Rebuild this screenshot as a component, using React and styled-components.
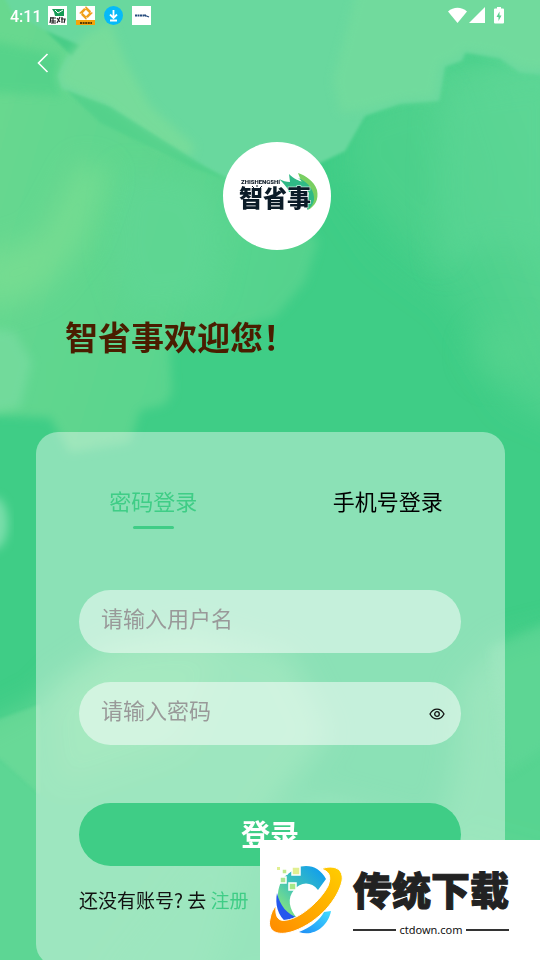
import { useState } from 'react';
import styled, { createGlobalStyle } from 'styled-components';

const GlobalStyle = createGlobalStyle`
    * {
        box-sizing: border-box;
    }
    html {
        scrollbar-width: none;
    }
    body {
        margin: 0;
        font-family: Roboto, "Noto Sans CJK SC", sans-serif;
        background-color: #3fcd86;
    }
    button, input {
        font-family: inherit;
        border: none;
        background: none;
        padding: 0;
    }
`;
const Screen = styled.div`
    position: relative;
    min-height: 100vh;
    overflow: hidden;
    background-color: #3fcd86;
`;
const Backdrop = styled.svg`
    position: absolute;
    inset: 0;
    width: 100%;
    height: 100%;
`;
const Content = styled.div`
    position: relative;
    display: flex;
    flex-direction: column;
`;
const StatusBar = styled.div`
    display: flex;
    align-items: center;
    justify-content: space-between;
    height: 32px;
    padding: 0 35px 0 10px;
    color: white;
`;
const StatusGroup = styled.div`
    display: flex;
    align-items: center;
    gap: ${(props) => props.$gap}px;
`;
const Clock = styled.span`
    font-size: 16px;
    font-weight: 500;
`;
const NavBar = styled.header`
    display: flex;
    align-items: center;
    height: 62px;
    padding-left: 30px;
`;
const BackButton = styled.button`
    display: flex;
    padding: 3px;
    cursor: pointer;
`;
const Avatar = styled.div`
    align-self: center;
    width: 108px;
    height: 108px;
    margin: 48px 0 0 14px;
    border-radius: 50%;
    overflow: hidden;
    background-color: white;
`;
const Title = styled.h1`
    margin: 62px 0 72px 65px;
    font-size: 33px;
    line-height: 48px;
    font-weight: 700;
    font-family: "Noto Sans CJK SC", sans-serif;
    color: #4a1d00;
`;
const Card = styled.main`
    margin: 0 35px 0 36px;
    padding: 48px 0 52px;
    border-radius: 22px;
    background-color: rgba(255, 255, 255, 0.4);
`;
const Tabs = styled.div`
    display: grid;
    grid-template-columns: 1fr 1fr;
`;
const Tab = styled.button`
    display: flex;
    flex-direction: column;
    align-items: center;
    font-size: 22px;
    line-height: 46px;
    color: ${(props) => (props.$active ? '#3fcd86' : 'black')};
    cursor: pointer;
    &::after {
        content: '';
        width: 41px;
        height: 3px;
        border-radius: 2px;
        background-color: ${(props) => (props.$active ? '#3fcd86' : 'transparent')};
    }
`;
const Form = styled.form`
    display: flex;
    flex-direction: column;
    gap: 29px;
    padding: 61px 44px 0 43px;
`;
const Field = styled.div`
    display: flex;
    align-items: center;
    height: 63px;
    padding: 0 16px 0 22px;
    border-radius: 32px;
    background-color: rgba(255, 255, 255, 0.5);
`;
const Input = styled.input`
    flex: 1;
    min-width: 0;
    height: 100%;
    padding-bottom: 4px;
    font-size: 22px;
    outline: none;
    &::placeholder {
        color: #999;
        opacity: 1;
    }
`;
const EyeButton = styled.button`
    display: flex;
    cursor: pointer;
`;
const SubmitButton = styled.button`
    height: 63px;
    margin-top: 29px;
    padding-bottom: 4px;
    border-radius: 32px;
    font-size: 29px;
    font-weight: 700;
    color: white;
    background-color: #3fcd86;
    cursor: pointer;
`;
const RegisterRow = styled.p`
    margin: 20px 43px 0;
    font-family: "Noto Sans CJK SC", sans-serif;
    font-size: 19px;
    line-height: 28px;
    color: #111;
`;
const RegisterLink = styled.a`
    color: #3fcd86;
    text-decoration: none;
`;
const Banner = styled.aside`
    position: fixed;
    right: 0;
    bottom: 0;
    display: flex;
    align-items: center;
    gap: 9px;
    height: 120px;
    padding: 0 31px 0 8px;
    background-color: white;
`;
const BannerText = styled.div`
    display: flex;
    flex-direction: column;
    color: #222;
    font-family: "Noto Sans CJK SC", sans-serif;
`;
const BannerName = styled.strong`
    font-size: 39px;
    line-height: 60px;
    font-weight: 900;
    -webkit-text-stroke: 1px #222;
`;
const BannerSite = styled.span`
    display: flex;
    align-items: center;
    gap: 3px;
    font-family: "Noto Sans", sans-serif;
    font-size: 11px;
    line-height: 24px;
    color: #111;
    &::before, &::after {
        content: '';
        flex: 1;
        height: 2px;
        background-color: #333;
    }
`;

function Background(){
    return(
        <Backdrop viewBox="0 0 540 960" preserveAspectRatio="none" aria-hidden="true">
            <defs>
                <filter id="crisp" x="-20%" y="-20%" width="140%" height="140%">
                    <feGaussianBlur stdDeviation="1.5" />
                </filter>
                <filter id="soft" x="-20%" y="-20%" width="140%" height="140%">
                    <feGaussianBlur stdDeviation="5" />
                </filter>
                <filter id="softer" x="-40%" y="-40%" width="180%" height="180%">
                    <feGaussianBlur stdDeviation="14" />
                </filter>
                <linearGradient id="leftWash" x1="0" y1="0.3" x2="1" y2="0.7">
                    <stop offset="0" stopColor="#68d88f" />
                    <stop offset="1" stopColor="#52d28d" />
                </linearGradient>
                <linearGradient id="rightWash" x1="0.2" y1="0.6" x2="0.8" y2="0.2">
                    <stop offset="0" stopColor="#3fcd86" />
                    <stop offset="0.6" stopColor="#52d28e" />
                    <stop offset="1" stopColor="#5cd694" />
                </linearGradient>
            </defs>

            {/* right side */}
            <path d="M340 120L430 60L580 50V430L510 400L450 300L380 250L340 190Z" fill="url(#rightWash)" filter="url(#softer)" />
            <path d="M350 115L440 85L470 180L440 260L390 220L345 170Z" fill="#50d18c" opacity="0.6" filter="url(#softer)" />
            <path d="M440 90L560 70V260L500 240L440 270L435 180Z" fill="#5cd695" opacity="0.6" filter="url(#softer)" />
            <ellipse cx="505" cy="350" rx="35" ry="30" fill="#58d48e" opacity="0.5" filter="url(#softer)" />

            {/* left side */}
            <path d="M-20 -10H60L240 165L318 240L305 280L275 315L240 325L170 345L172 390L165 402L140 408L130 440L70 450L50 415L-20 412Z" fill="url(#leftWash)" filter="url(#soft)" />
            <path d="M120 170L200 180L225 230L210 300L130 310L110 250Z" fill="#60d795" opacity="0.7" filter="url(#softer)" />
            <path d="M80 160L110 170L85 240L45 290L-20 310V255L40 235Z" fill="#7fdf93" opacity="0.65" filter="url(#softer)" />
            <path d="M-20 325L15 330L32 360L20 405L-20 412Z" fill="#7ddda4" opacity="0.6" filter="url(#soft)" />
            <path d="M-10 40L60 55L60 95L-10 92Z" fill="#50d188" opacity="0.7" filter="url(#soft)" />
            <ellipse cx="-6" cy="520" rx="14" ry="26" fill="#79deaa" filter="url(#soft)" />

            {/* top band */}
            <g filter="url(#crisp)">
                <path d="M0 -10H550V75L520 72L500 58L465 52L462 60L445 66L439 100L400 103L365 115L345 150L320 162L270 182L226 176L195 162L150 135L105 104L62 88L58 75L66 58L80 46L45 30L12 12Z" fill="#69d89e" />
                <path d="M45 30L80 45L72 56Z" fill="#41cb86" opacity="0.8" />
            </g>
            <path d="M60 85L58 75L66 58L85 35L110 22L125 60L150 105L195 145L190 157L160 148L105 104Z" fill="#7cdd9a" opacity="0.75" filter="url(#soft)" />
            <path d="M357 -10H550V70L520 68L500 56L465 50L459 58L441 64L435 98L400 100L365 109L340 112L333 80Z" fill="#73db9d" opacity="0.8" filter="url(#soft)" />
            <path d="M66 90L110 106L225 178L195 168L100 122Z" fill="#50d08a" opacity="0.7" filter="url(#crisp)" />

            {/* bottom */}
            <g filter="url(#softer)">
                <path d="M-40 735L40 695L120 640L190 622L290 650L330 730L250 830L200 1000H-40Z" fill="#66d897" opacity="0.8" />
                <path d="M50 680L110 640L220 650L180 740L60 780Z" fill="#77dd9b" opacity="0.45" />
                <path d="M580 620L500 640L460 680L455 760L430 860L580 900Z" fill="#5fd694" opacity="0.8" />
                <path d="M100 980L200 850L320 790L580 860V980Z" fill="#5dd594" opacity="0.7" />
            </g>
            <path d="M-10 718L40 700V790L-10 745Z" fill="#70da9a" opacity="0.6" filter="url(#crisp)" />
            <path d="M490 645L550 618V740L505 770Z" fill="#62d797" opacity="0.6" filter="url(#soft)" />
        </Backdrop>
    );
}

function NotificationIcons(){
    return(
        <svg width="103" height="20" viewBox="0 0 103 20" aria-hidden="true">
            <rect width="19" height="19" fill="white" />
            <path d="M4 3H16V10H7L6 6Z" fill="#159a54" />
            <path d="M7 4L10 7L15 4" fill="none" stroke="white" strokeWidth="1" />
            <path d="M2 12H8M2 15H8M3 17H8M5 11V17M9 12L12 16M12 11L9 17M14 11V17M13 13H17L16 17M3 11L2 17" stroke="#222" strokeWidth="1.2" fill="none" />
            <rect x="28" width="19" height="19" fill="white" />
            <rect x="28" y="14" width="19" height="5" fill="#f5a30a" />
            <path d="M38 2L43 7L38 12L33 7Z" fill="none" stroke="#f0a01e" strokeWidth="2.5" strokeDasharray="6 1" />
            <path d="M32 17H44" stroke="#5a3b00" strokeWidth="2" strokeDasharray="2 0.6" />
            <circle cx="65.5" cy="9.5" r="9.5" fill="#06baf8" />
            <path d="M65.5 4V11M62 8.5L65.5 12L69 8.5M62 14.5H69" fill="none" stroke="white" strokeWidth="1.8" />
            <rect x="84" width="19" height="19" fill="white" />
            <path d="M87 9.5H98" stroke="#244a7c" strokeWidth="2" strokeDasharray="2 0.5" />
            <path d="M96 9L101 11" stroke="#244a7c" strokeWidth="1.2" />
        </svg>
    );
}

function SystemIcons(){
    return(
        <svg width="57" height="18" viewBox="0 0 57 18" aria-hidden="true" fill="white">
            <path d="M0 4.5C5.5 -0.5 13.5 -0.5 19 4.5L9.5 16Z" />
            <path d="M37 0V16H21Z" />
            <path d="M49 0H53V1.5H55Q56 1.5 56 2.5V15.5Q56 16.5 55 16.5H47Q46 16.5 46 15.5V2.5Q46 1.5 47 1.5H49Z" />
            <path d="M51.5 4.5L48.5 10H50.5V14L53.5 8.5H51.5Z" fill="#59cf8d" />
        </svg>
    );
}

function BrandLogo(){
    return(
        <svg width="108" height="108" viewBox="0 0 108 108" role="img" aria-label="智省事">
            <path d="M75 31C82 33 91 39 94 48C96 58 92 64 85 68C89 60 88 49 80 44Z" fill="#79cf62" />
            <path d="M56 37C60 39 63 40 67 40L66 32C71 37 76 39 80 40L75 36C86 40 92 50 91 58C90 63 87 66 84 68L86 50H66C65 46 61 42 56 37Z" fill="#2fb986" />
            <text x="18" y="42" fontFamily="Roboto, sans-serif" fontSize="6" fontWeight="900" fill="#101c28">ZHISHENGSHI</text>
            <text x="16" y="65" fontFamily="Liberation Sans, Noto Sans CJK SC, sans-serif" fontSize="24" fontWeight="900" fill="#0c1c28" stroke="white" strokeWidth="1" paintOrder="stroke">智省事</text>
            <path d="M29 44L31 46M34 43V45M39 44L37 46" stroke="#0c1c28" strokeWidth="1" />
        </svg>
    );
}

function BannerLogo(){
    return(
        <svg width="76" height="74" viewBox="0 0 76 74" aria-hidden="true">
            <defs>
                <linearGradient id="arc" x1="0.2" y1="1" x2="1" y2="0.1">
                    <stop offset="0" stopColor="#8ce87c" />
                    <stop offset="0.45" stopColor="#40c3b6" />
                    <stop offset="1" stopColor="#0d9bf2" />
                </linearGradient>
                <linearGradient id="ring" x1="0" y1="1" x2="1" y2="0">
                    <stop offset="0" stopColor="#ff8a00" />
                    <stop offset="1" stopColor="#ffce00" />
                </linearGradient>
                <linearGradient id="tail" x1="0" y1="1" x2="1" y2="0">
                    <stop offset="0" stopColor="#1e8df5" />
                    <stop offset="1" stopColor="#40dcff" />
                </linearGradient>
            </defs>
            <path d="M28 5C40 0 52 4 58 16L50 27C43 18 32 19 26 27C19 35 21 46 29 55L18 58C8 46 7 26 16 14Z" fill="url(#arc)" />
            <path d="M9 30C12 43 19 51 30 55L20 61C9 52 7 41 9 30Z" fill="#2458ed" />
            <path d="M31 69C42 65 52 57 56 49L63 48C60 64 45 74 31 69Z" fill="url(#tail)" />
            <path d="M53 6C66 1 76 6 74 18C70 36 51 59 26 68C9 74 -1 68 2 56C3 50 5 46 8 43C7 54 10 59 19 57C33 55 53 37 60 23C64 13 61 8 53 6Z" fill="url(#ring)" stroke="white" strokeWidth="1" />
            <g stroke="white" strokeWidth="1.5">
                <rect x="24" y="4" width="8" height="8" fill="#e1ef91" />
                <rect x="14" y="6" width="5" height="5" fill="#c0e98b" />
                <rect x="12" y="14" width="6" height="6" fill="#a9e593" />
                <rect x="21" y="20" width="7" height="7" fill="#a6e889" />
            </g>
            <rect x="9" y="4" width="3" height="3" fill="#e1ef91" />
        </svg>
    );
}

function LoginPage(){
    const [tab, setTab] = useState('password');
    const [showPassword, setShowPassword] = useState(false);

    return(
        <Screen>
            <GlobalStyle />
            <Background />
            <Content>
                <StatusBar>
                    <StatusGroup $gap={6}>
                        <Clock>4:11</Clock>
                        <NotificationIcons />
                    </StatusGroup>
                    <SystemIcons />
                </StatusBar>
                <NavBar>
                    <BackButton type="button" aria-label="返回">
                        <svg width="20" height="20" viewBox="0 0 20 20" fill="none" stroke="white" strokeWidth="1.6">
                            <path d="M14.5 1L5.5 10L14.5 19" />
                        </svg>
                    </BackButton>
                </NavBar>
                <Avatar><BrandLogo /></Avatar>
                <Title>智省事欢迎您！</Title>
                <Card>
                    <Tabs>
                        <Tab type="button" $active={tab === 'password'} onClick={() => setTab('password')}>密码登录</Tab>
                        <Tab type="button" $active={tab === 'phone'} onClick={() => setTab('phone')}>手机号登录</Tab>
                    </Tabs>
                    <Form onSubmit={(e) => e.preventDefault()}>
                        <Field>
                            <Input type="text" aria-label="用户名" placeholder="请输入用户名" />
                        </Field>
                        <Field>
                            <Input type={showPassword ? 'text' : 'password'} aria-label="密码" placeholder="请输入密码" />
                            <EyeButton type="button" aria-label="显示密码" onClick={() => setShowPassword(!showPassword)}>
                                <svg width="16" height="14" viewBox="0 0 16 14" fill="none" stroke="#111" strokeWidth="1.3">
                                    <path d="M1 7C4.5 0.5 11.5 0.5 15 7C11.5 13.5 4.5 13.5 1 7Z" />
                                    <circle cx="8" cy="7" r="2.3" />
                                </svg>
                            </EyeButton>
                        </Field>
                        <SubmitButton type="submit">登录</SubmitButton>
                    </Form>
                    <RegisterRow>
                        还没有账号? 去 <RegisterLink href="#register">注册</RegisterLink>
                    </RegisterRow>
                </Card>
            </Content>
            <Banner>
                <BannerLogo />
                <BannerText>
                    <BannerName>传统下载</BannerName>
                    <BannerSite>ctdown.com</BannerSite>
                </BannerText>
            </Banner>
        </Screen>
    );
}

export default LoginPage;
